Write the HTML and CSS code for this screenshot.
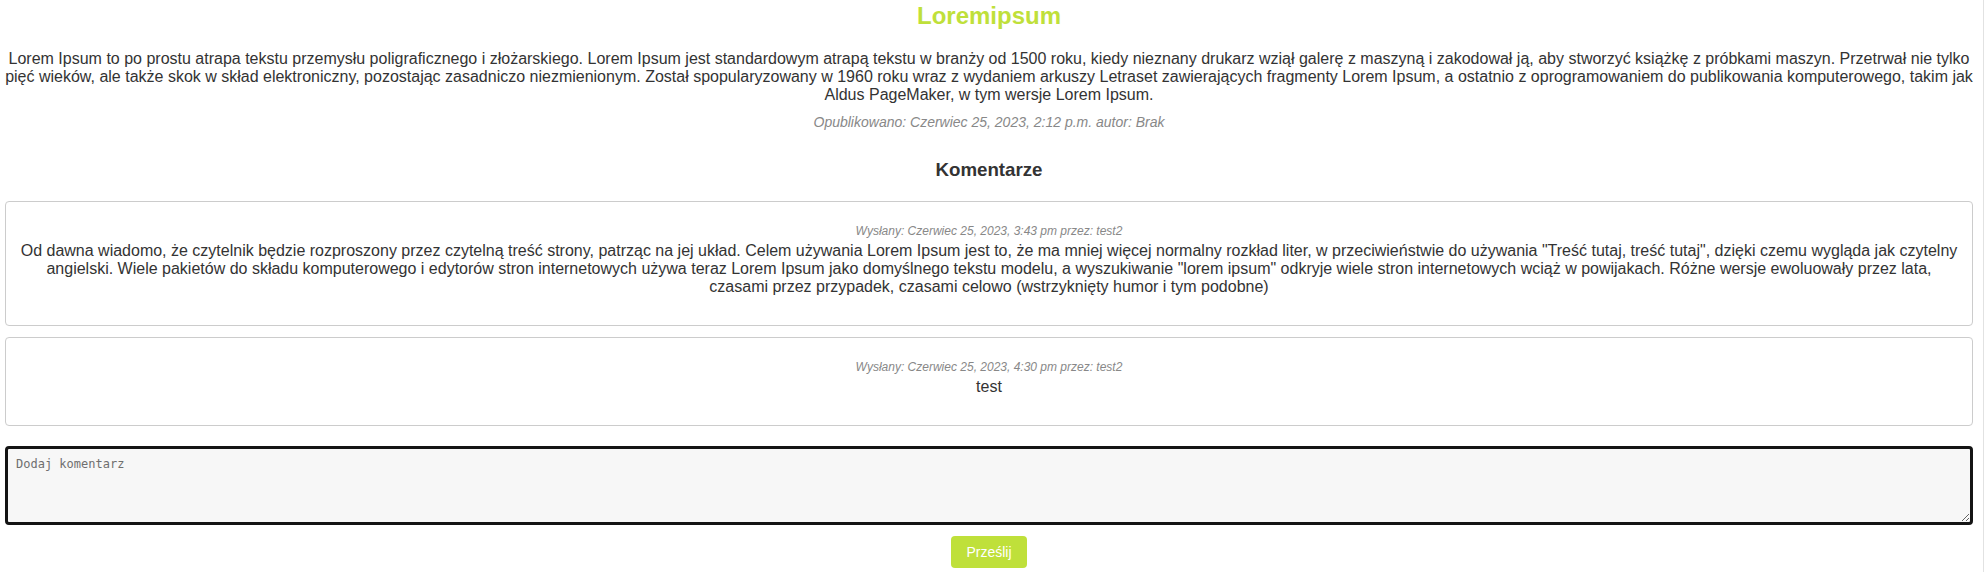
FILE: index.html
```html
<!DOCTYPE html>
<html lang="pl">
<head>
<meta charset="utf-8">
<title>Loremipsum</title>
<link rel="stylesheet" href="styles.css">
</head>
<body>
<div class="page">
  <article class="post">
    <h1 class="post-title">Loremipsum</h1>
    <p class="post-body">Lorem Ipsum to po prostu atrapa tekstu przemysłu poligraficznego i złożarskiego. Lorem Ipsum jest standardowym atrapą tekstu w branży od 1500 roku, kiedy nieznany drukarz wziął galerę z maszyną i zakodował ją, aby stworzyć książkę z próbkami maszyn. Przetrwał nie tylko pięć wieków, ale także skok w skład elektroniczny, pozostając zasadniczo niezmienionym. Został spopularyzowany w 1960 roku wraz z wydaniem arkuszy Letraset zawierających fragmenty Lorem Ipsum, a ostatnio z oprogramowaniem do publikowania komputerowego, takim jak Aldus PageMaker, w tym wersje Lorem Ipsum.</p>
    <p class="post-meta">Opublikowano: Czerwiec 25, 2023, 2:12 p.m. autor: Brak</p>
  </article>

  <section class="comments">
    <h3 class="comments-title">Komentarze</h3>
    <div class="comment">
      <p class="comment-meta">Wysłany: Czerwiec 25, 2023, 3:43 pm przez: test2</p>
      <p class="comment-body">Od dawna wiadomo, że czytelnik będzie rozproszony przez czytelną treść strony, patrząc na jej układ. Celem używania Lorem Ipsum jest to, że ma mniej więcej normalny rozkład liter, w przeciwieństwie do używania "Treść tutaj, treść tutaj", dzięki czemu wygląda jak czytelny angielski. Wiele pakietów do składu komputerowego i edytorów stron internetowych używa teraz Lorem Ipsum jako domyślnego tekstu modelu, a wyszukiwanie "lorem ipsum" odkryje wiele stron internetowych wciąż w powijakach. Różne wersje ewoluowały przez lata, czasami przez przypadek, czasami celowo (wstrzyknięty humor i tym podobne)</p>
    </div>
    <div class="comment">
      <p class="comment-meta">Wysłany: Czerwiec 25, 2023, 4:30 pm przez: test2</p>
      <p class="comment-body">test</p>
    </div>

    <form class="comment-form" onsubmit="return false;">
      <textarea class="comment-input" placeholder="Dodaj komentarz"></textarea>
      <button type="submit" class="btn-submit">Prześlij</button>
    </form>
  </section>
</div>
</body>
</html>
```

FILE: styles.css
```css
html, body {
  margin: 0;
  padding: 0;
  background: #ffffff;
}

body {
  font-family: "Liberation Sans", Arial, sans-serif;
  color: #333333;
}

.page {
  box-sizing: border-box;
  width: 1984px;
  min-height: 572px;
  padding: 2px 10px 0 5px;
  border-right: 1px solid #e2e2e2;
  text-align: center;
}

.post-title {
  margin: 0;
  font-size: 24px;
  font-weight: bold;
  line-height: normal;
  color: #bfe03a;
}

.post-body {
  margin: 20px 0 0;
  font-size: 16px;
  line-height: normal;
  color: #333333;
}

.post-meta {
  margin: 10px 0 0;
  font-size: 14px;
  font-style: italic;
  line-height: normal;
  color: #888888;
}

.comments-title {
  margin: 29px 0 20px;
  font-size: 18.72px;
  font-weight: bold;
  line-height: normal;
  color: #333333;
}

.comment {
  border: 1px solid #cccccc;
  border-radius: 4px;
  padding: 22px 10px 29px;
  margin-bottom: 11px;
}

.comment-meta {
  margin: 0 0 4px;
  font-size: 12px;
  font-style: italic;
  line-height: normal;
  color: #888888;
}

.comment-body {
  margin: 0;
  font-size: 16px;
  line-height: normal;
  color: #333333;
}

.comment-form {
  display: flex;
  flex-direction: column;
  align-items: center;
  gap: 11px;
  margin-top: 20px;
}

.comment-input {
  box-sizing: border-box;
  display: block;
  width: 100%;
  height: 79px;
  margin: 0;
  padding: 8px;
  border: 3px solid #141414;
  border-radius: 4px;
  background: #f7f7f7;
  font-family: "DejaVu Sans Mono", "Liberation Mono", monospace;
  font-size: 12px;
  color: #333333;
  outline: none;
}

.comment-input::placeholder {
  color: #6f6f6f;
}

.btn-submit {
  border: none;
  border-radius: 4px;
  padding: 8px 15px;
  background: #bfe03a;
  color: #ffffff;
  font-family: "Liberation Sans", Arial, sans-serif;
  font-size: 14px;
  line-height: 16px;
  cursor: pointer;
}
```
